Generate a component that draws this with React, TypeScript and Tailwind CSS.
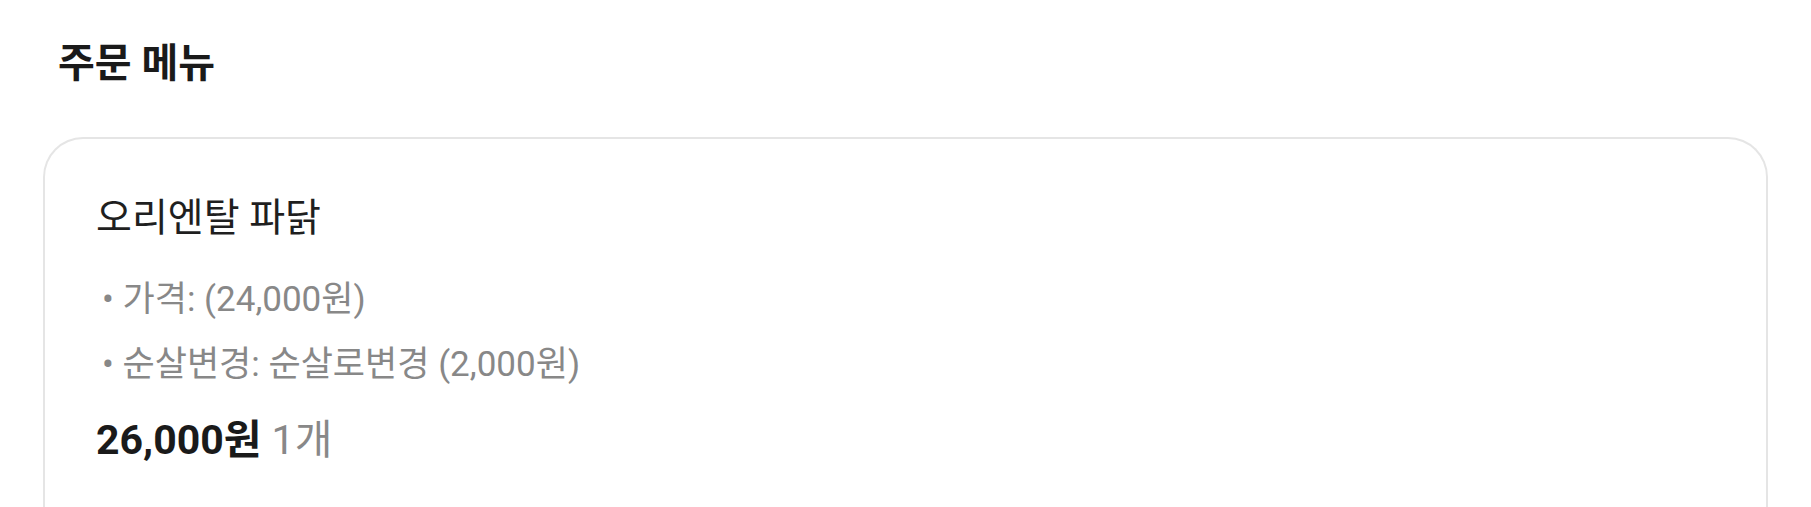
const font = "font-['Roboto','Noto_Sans_CJK_KR',sans-serif]";

const options = ['가격: (24,000원)', '순살변경: 순살로변경 (2,000원)'];

const App = () => {
  return (
    <div className={`min-h-screen bg-white px-[43px] pt-[40px] ${font}`}>
      {/* 제목 */}
      <h2 className="pl-[15px] text-[40px] font-bold leading-[48px] text-[#1a1a1a]">주문 메뉴</h2>

      {/* 메뉴 카드 */}
      <div className="mt-[49px] rounded-t-[40px] border-2 border-b-0 border-[#e5e5e5] px-[51px] pt-[55px] pb-[80px]">
        <p className="text-[39px] leading-[48px] text-[#1f1f1f]">오리엔탈 파닭</p>

        <ul className="mt-[25px] pl-[6px]">
          {options.map((opt) => (
            <li key={opt} className="text-[35px] leading-[65px] text-[#888888]">
              • {opt}
            </li>
          ))}
        </ul>

        <p className="mt-[16px] text-[41px] leading-[54px]">
          <span className="font-bold text-[#1a1a1a]">26,000원</span>{' '}
          <span className="text-[#888888]">1개</span>
        </p>
      </div>
    </div>
  );
};

export default App;
